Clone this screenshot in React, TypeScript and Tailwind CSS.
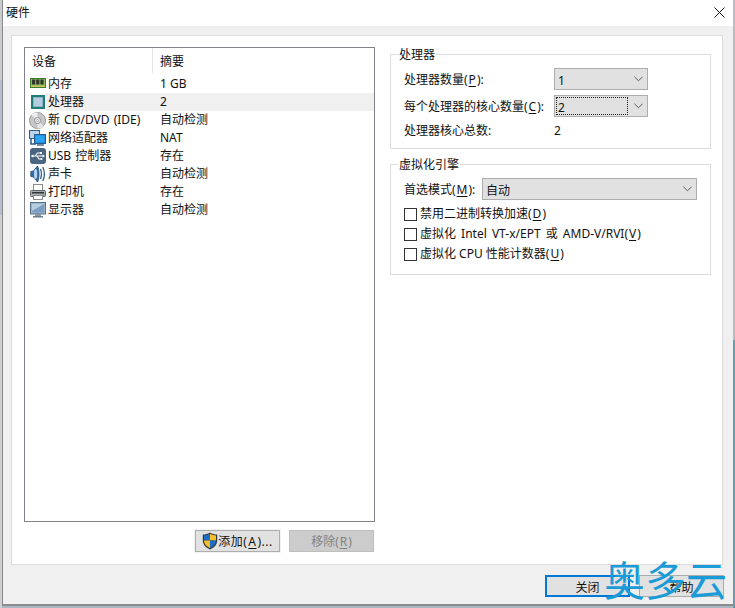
import React from "react";

const font = { fontFamily: '"Noto Sans", "Noto Sans CJK SC", sans-serif' };

const Chevron = () => (
  <svg width="9" height="6" viewBox="0 0 10 6" className="shrink-0">
    <path d="M0.5 0.5 L5 5 L9.5 0.5" fill="none" stroke="#5a5a5a" strokeWidth="1.1" />
  </svg>
);

const Mem = () => (
  <svg width="16" height="16" viewBox="0 0 16 16">
    <rect x="0" y="2" width="16" height="10" fill="#4f8f35" />
    <rect x="0.5" y="2.5" width="15" height="9" fill="#86bd60" stroke="#3f7d2a" strokeWidth="1" />
    <rect x="2" y="3.5" width="3.2" height="5" fill="#33362c" />
    <rect x="6.2" y="3.5" width="3.2" height="5" fill="#33362c" />
    <rect x="10.4" y="3.5" width="3.2" height="5" fill="#33362c" />
    <rect x="1" y="9.6" width="14" height="1.2" fill="#d8c860" />
  </svg>
);
const Cpu = () => (
  <svg width="14" height="14" viewBox="0 0 14 14">
    <rect x="0" y="0" width="14" height="14" fill="#1e7f74" />
    <rect x="2.5" y="2.5" width="9" height="9" fill="#b5cde0" stroke="#8fb0c8" />
  </svg>
);
const Disc = () => (
  <svg width="17" height="17" viewBox="0 0 16 16">
    <circle cx="8" cy="8" r="7.6" fill="#c6c6c8" stroke="#8f9092" strokeWidth="0.8" />
    <path d="M8 8 L2 2.5 A7.5 7.5 0 0 1 8 0.5 Z" fill="#ececec" />
    <path d="M8 8 L14 13.5 A7.5 7.5 0 0 1 8 15.5 Z" fill="#e6e6e6" />
    <circle cx="8" cy="8" r="2.9" fill="#e8e8e8" stroke="#858585" strokeWidth="0.8" />
    <circle cx="8" cy="8" r="1" fill="#ffffff" stroke="#8a8a8a" strokeWidth="0.5" />
  </svg>
);
const Net = () => (
  <svg width="17" height="17" viewBox="0 0 17 17">
    <rect x="0.5" y="0.5" width="10" height="8" fill="#bcd4ea" stroke="#2c5c8c" />
    <path d="M2 9 V14 H7" fill="none" stroke="#2c5c8c" strokeWidth="1.5" />
    <rect x="5.5" y="4.5" width="11" height="9" fill="#1f8fe0" stroke="#2c5c8c" />
    <rect x="7" y="6" width="8" height="6" fill="#2aa4f0" />
    <rect x="8" y="14" width="7" height="2" fill="#6f8ba8" />
  </svg>
);
const Usb = () => (
  <svg width="16" height="16" viewBox="0 0 16 16">
    <rect x="0" y="0" width="16" height="16" rx="3" fill="#4a6580" />
    <path d="M2 8 H13 M5 8 L7.5 5 H10 M7 8 L9 11 H11" fill="none" stroke="#fff" strokeWidth="1.1" />
    <rect x="10" y="4" width="2" height="2" fill="#fff" />
    <circle cx="11.5" cy="11" r="1" fill="#fff" />
    <path d="M12.5 6.5 L15 8 L12.5 9.5 Z" fill="#fff" />
    <circle cx="2.5" cy="8" r="1.2" fill="#fff" />
  </svg>
);
const Sound = () => (
  <svg width="16" height="18" viewBox="0 0 16 18">
    <path d="M0.8 6.5 L3.5 6 L7.5 1 C9.5 4 9.5 14 7.5 17 L3.5 12 L0.8 11.5 Z" fill="#2f6cae" stroke="#234a72" strokeWidth="0.8" />
    <ellipse cx="5.6" cy="9" rx="1.6" ry="5" fill="#b6d5f2" />
    <path d="M10.5 4 Q12.4 9 10.5 14 M12.8 2 Q16 9 12.8 16" fill="none" stroke="#34608c" strokeWidth="1.3" />
  </svg>
);
const Printer = () => (
  <svg width="16" height="16" viewBox="0 0 16 16">
    <rect x="3.5" y="0.5" width="9" height="6" fill="#fff" stroke="#8a8a8a" />
    <rect x="0.5" y="6.5" width="15" height="6" rx="1" fill="#a9adb2" stroke="#5f6468" />
    <rect x="2" y="8" width="12" height="1.5" fill="#33373a" />
    <rect x="13" y="10" width="1.5" height="1.5" fill="#48c048" />
    <rect x="3.5" y="11.5" width="9" height="4" fill="#fff" stroke="#8a8a8a" />
  </svg>
);
const Monitor = () => (
  <svg width="16" height="16" viewBox="0 0 16 16">
    <rect x="0.5" y="0.5" width="15" height="11.5" fill="#9eb6cc" stroke="#58708a" />
    <rect x="2" y="2" width="12" height="8.5" fill="#7b9dc0" />
    <path d="M2 2 H14 L2 9 Z" fill="#b6cde0" />
    <rect x="5" y="12" width="6" height="2" fill="#8b9aa8" />
    <rect x="3" y="14" width="10" height="1.5" fill="#6c7f92" />
  </svg>
);
const Shield = () => (
  <svg width="16" height="18" viewBox="0 0 16 18">
    <path d="M8 0.5 C6 2 3 2.5 0.8 2.5 V8.5 C0.8 13 4.5 16 8 17.5 C11.5 16 15.2 13 15.2 8.5 V2.5 C13 2.5 10 2 8 0.5 Z" fill="#36393c" />
    <path d="M8 1.8 C6 3 3.5 3.4 2 3.4 V8.5 H8 Z" fill="#1c6fc4" />
    <path d="M8 1.8 C10 3 12.5 3.4 14 3.4 V8.5 H8 Z" fill="#f5bf2c" />
    <path d="M2 8.5 H8 V16 C5 14.6 2 12.4 2 8.5 Z" fill="#f5bf2c" />
    <path d="M14 8.5 H8 V16 C11 14.6 14 12.4 14 8.5 Z" fill="#1c6fc4" />
  </svg>
);

const rows: [React.ReactNode, string, string, boolean?][] = [
  [<Mem />, "内存", "1 GB"],
  [<Cpu />, "处理器", "2", true],
  [<Disc />, "新 CD/DVD (IDE)", "自动检测"],
  [<Net />, "网络适配器", "NAT"],
  [<Usb />, "USB 控制器", "存在"],
  [<Sound />, "声卡", "自动检测"],
  [<Printer />, "打印机", "存在"],
  [<Monitor />, "显示器", "自动检测"],
];

const Combo = ({ value, w, focus }: { value: string; w: string; focus?: boolean }) => (
  <div className={`${w} h-[22px] shrink-0 bg-[#e1e1e1] border border-[#adadad] flex items-center pr-[4px] pl-[2px]`}>
    <div className={`flex-1 h-[16px] flex items-center pl-[1px] leading-none ${focus ? "outline-1 outline-dotted outline-[#222]" : ""}`}>
      <span className="pt-[3px]">{value}</span>
    </div>
    <div className="ml-[7px]"><Chevron /></div>
  </div>
);

const Check = ({ children, spaced }: { children: React.ReactNode; spaced?: boolean }) => (
  <div className="h-[20px] flex items-center gap-[3px]">
    <div className="w-[13px] h-[13px] bg-white border border-[#333]" />
    <span className={spaced ? "[word-spacing:2px]" : ""}>{children}</span>
  </div>
);

const U = ({ c }: { c: string }) => <span className="underline underline-offset-2 mx-[1px]">{c}</span>;

const Group = ({ title, className, children }: { title: string; className: string; children: React.ReactNode }) => (
  <div className={`relative border border-[#dcdcdc] ${className}`}>
    <span className="absolute left-[7px] -top-[8px] bg-white px-[1px] leading-[16px]">{title}</span>
    {children}
  </div>
);

const Btn = ({ children, className }: { children: React.ReactNode; className: string }) => (
  <div className={`w-[85px] h-[22px] flex items-center justify-center ${className}`}>{children}</div>
);

export default function App() {
  return (
    <div className="relative w-[735px] h-[608px] overflow-hidden bg-[#a9b6c4] flex text-[12px] text-[#111]" style={font}>
      <div className="w-[2px] h-full flex flex-col shrink-0">
        <div className="h-[80px] bg-[#c8ccd0]" />
        <div className="h-[135px] bg-[#b4c0d0]" />
        <div className="flex-1 bg-[#cfcfcf]" />
      </div>
      <div className="w-[731px] h-[606px] shrink-0 border-l border-[#8a8a8a] border-b-[2px] border-b-[#8c8c8c] bg-[#f0f0f0] flex flex-col">
        <div className="h-[26px] bg-white flex items-center justify-between pl-[3px] pr-[7px] shrink-0">
          <span className="text-[12px]">硬件</span>
          <svg width="11" height="11" viewBox="0 0 11 11" className="mr-[1px] -mt-[1px]">
            <path d="M0.5 0.5 L10.5 10.5 M10.5 0.5 L0.5 10.5" stroke="#111" strokeWidth="1" />
          </svg>
        </div>
        <div className="ml-[8px] mt-[9px] w-[712px] h-[530px] bg-white border border-[#dcdcdc] flex shrink-0 pl-[12px] pt-[11px]">
          <div className="w-[351px] shrink-0 flex flex-col">
            <div className="h-[475px] border border-[#82828a] flex flex-col">
              <div className="h-[27px] flex shrink-0">
                <div className="w-[128px] border-r border-[#e5e5e5] h-[25px] pl-[7px] pt-[3px] flex items-center">设备</div>
                <div className="pl-[7px] pt-[3px] flex items-center h-[25px]">摘要</div>
              </div>
              {rows.map(([icon, name, val, sel]) => (
                <div key={name} className="h-[18px] flex items-center">
                  <div className="w-[21px] pl-[4px] shrink-0 flex items-center justify-center h-full">{icon}</div>
                  <div className={`flex-1 flex items-center h-full ${sel ? "bg-[#f0f0f0]" : ""}`}>
                    <span className="w-[114px] pl-[2px] shrink-0 whitespace-nowrap [word-spacing:1px]">{name}</span>
                    <span>{val}</span>
                  </div>
                </div>
              ))}
            </div>
            <div className="mt-[8px] flex justify-end gap-[9px] pr-[1px]">
              <Btn className="bg-[#e1e1e1] border border-[#adadad] outline-1 outline-[#f2f2f2]">
                <Shield />
                <span className="pt-[2px] tracking-[0.5px]">添加(<U c="A" />)...</span>
              </Btn>
              <Btn className="bg-[#cccccc] border border-[#bfbfbf] text-[#838383]">
                <span className="pt-[2px]">移除(<U c="R" />)</span>
              </Btn>
            </div>
          </div>
          <div className="ml-[15px] w-[321px] shrink-0 pt-[7px] flex flex-col gap-[15px]">
            <Group title="处理器" className="h-[95px] pl-[13px] pr-[62px] pt-[13px] flex flex-col">
              <div className="flex items-center justify-between h-[22px]">
                <span className="pt-[2px]">处理器数量(<U c="P" />):</span>
                <Combo value="1" w="w-[94px]" />
              </div>
              <div className="flex items-center justify-between h-[22px] mt-[5px]">
                <span className="pt-[2px]">每个处理器的核心数量(<U c="C" />):</span>
                <Combo value="2" w="w-[94px]" focus />
              </div>
              <div className="flex items-center h-[20px] mt-[4px]">
                <span className="w-[150px]">处理器核心总数:</span>
                <span>2</span>
              </div>
            </Group>
            <Group title="虚拟化引擎" className="h-[111px] pl-[13px] pr-[13px] pt-[13px] flex flex-col">
              <div className="flex items-center justify-between h-[22px] mb-[4px]">
                <span className="pt-[2px]">首选模式(<U c="M" />):</span>
                <Combo value="自动" w="w-[215px]" />
              </div>
              <Check>禁用二进制转换加速(<U c="D" />)</Check>
              <Check spaced>虚拟化 Intel VT-x/EPT 或 AMD-V/RVI(<U c="V" />)</Check>
              <Check>虚拟化 CPU 性能计数器(<U c="U" />)</Check>
            </Group>
          </div>
        </div>
        <div className="mt-[10px] pl-[542px] flex gap-[9px] shrink-0">
          <Btn className="border-2 border-[#0078d7] bg-[#e1e1e1] pt-[4px]">关闭</Btn>
          <Btn className="border border-[#adadad] bg-[#e1e1e1] pt-[4px]">帮助</Btn>
        </div>
      </div>
      <div className="w-[2px] h-full shrink-0 flex flex-col">
        <div className="h-[340px] bg-[#b9bcc0]" />
        <div className="flex-1 bg-[#5f9db5]" />
      </div>
      <div className="absolute left-[604px] top-[550px] text-[41px] leading-[56px] text-[#1a9bd7] whitespace-nowrap" style={{ fontFamily: '"Noto Sans CJK SC", sans-serif' }}>
        奥多云
      </div>
    </div>
  );
}
